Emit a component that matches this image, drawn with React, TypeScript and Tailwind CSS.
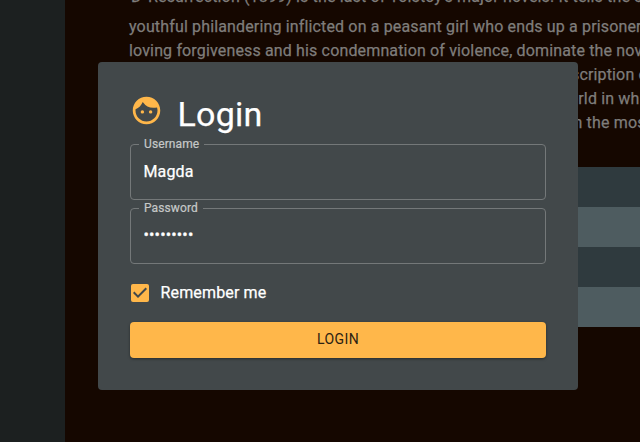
import { MdFace } from "react-icons/md";

const lines = [
  "youthful philandering inflicted on a peasant girl who ends up a prisoner",
  "loving forgiveness and his condemnation of violence, dominate the novel",
];

const lineEnds = ["scription of", "orld in which", "n the most"];
const endOffsets = ["pl-[442px]", "pl-[440px]", "pl-[444.5px]"];

function Field({ label, type, value, className, inputClass }: { label: string; type: string; value: string; className: string; inputClass: string }) {
  return (
    <fieldset className={`h-[61px] shrink-0 rounded border border-[#747879] pl-2 ${className}`}>
      <legend className="h-[11px] px-[5px] text-[12px] leading-[11px] tracking-[0.11px] text-[#c6c8c8] [-webkit-text-stroke:0.2px]">{label}</legend>
      <input
        type={type}
        defaultValue={value}
        className={`block h-[23px] w-full bg-transparent px-[4.5px] text-[16px] tracking-[0.15px] text-white outline-none ${inputClass}`}
      />
    </fieldset>
  );
}

export default function App() {
  return (
    <div className="relative flex h-[442px] w-[640px] overflow-hidden bg-[#150700] font-['Roboto',sans-serif] text-[16px] tracking-[0.15px] [-webkit-text-stroke:0.25px]">
      <aside className="w-[65px] shrink-0 bg-[#1c2020]" />
      <main className="min-w-0 grow overflow-hidden text-[#7f7d7b]">
        <div className="-mt-[13px] ml-16 whitespace-nowrap leading-6">
          <p className="flex h-7 items-center pl-[2px]">
            <span className="-mt-[9px] w-[17px] shrink-0">D</span>
            <span className="-mt-[9px]">Resurrection (1899) is the last of Tolstoy's major novels. It tells the story</span>
          </p>
          {lines.map((t) => (
            <p key={t}>{t}</p>
          ))}
          {lineEnds.map((t, i) => (
            <p key={t} className={endOffsets[i]}>{t}</p>
          ))}
        </div>
        <div className="mt-8 ml-16">
          <div className="h-10 bg-[#2f3a3e]" />
          <div className="h-10 bg-[#4e5c60]" />
          <div className="h-10 bg-[#2f3a3e]" />
          <div className="h-10 bg-[#4e5c60]" />
        </div>
      </main>
      <div className="absolute top-[62px] left-[98px] flex h-[328px] w-[480px] flex-col rounded bg-[#42484a] px-8 text-white">
        <div className="flex h-[77px] shrink-0 items-end">
          <MdFace className="mb-[12.5px] -ml-[0.5px] size-[33px] text-[#ffb74a] [-webkit-text-stroke:0]" />
          <h1 className="mb-1 ml-[15px] text-[34px] leading-[42px] tracking-[0.25px]">Login</h1>
        </div>
        <Field label="Username" type="text" value="Magda" className="" inputClass="mt-[10px]" />
        <Field label="Password" type="password" value="123456789" className="mt-[3px]" inputClass="mt-[9px]" />
        <label className="mt-4 flex h-[26px] shrink-0 items-center">
          <span className="ml-px grid size-[18px] place-items-center rounded-[2px] bg-[#ffb74a]">
            <svg viewBox="0 0 18 18" className="size-[18px] fill-[#42484a]">
              <path d="M7 14L2 9l1.4-1.4L7 11.2l7.6-7.6L16 5z" />
            </svg>
          </span>
          <span className="ml-[11.5px]">Remember me</span>
        </label>
        <button className="mt-4 h-9 shrink-0 rounded bg-[#ffb74a] pb-0.5 text-[14px] tracking-[0.4px] text-[#2c2212] shadow-[0_1px_3px_rgba(0,0,0,0.4)] [-webkit-text-stroke:0]">
          LOGIN
        </button>
      </div>
    </div>
  );
}
